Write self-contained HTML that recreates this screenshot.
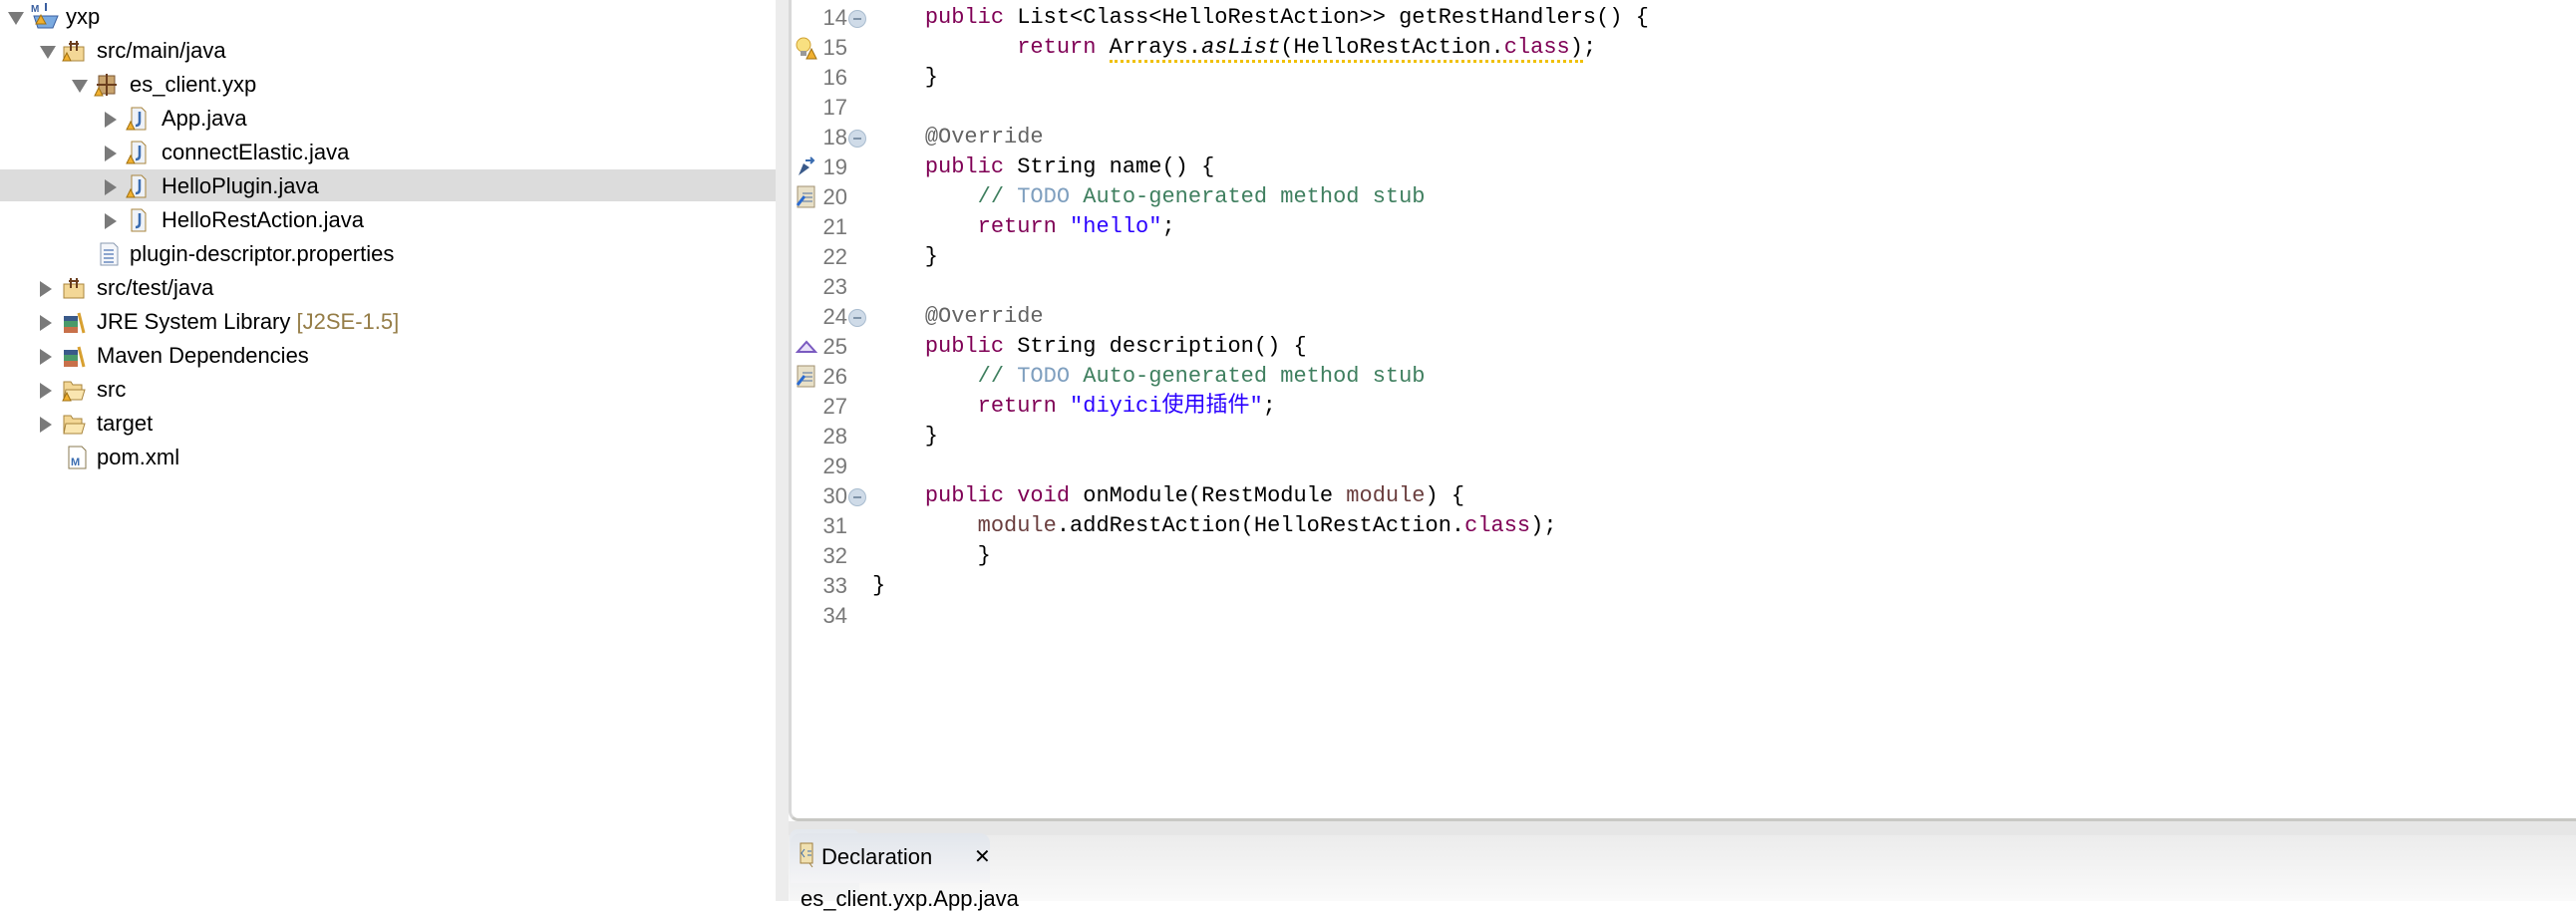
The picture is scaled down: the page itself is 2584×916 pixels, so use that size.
<!DOCTYPE html>
<html><head><meta charset="utf-8"><style>
body{margin:0;width:2584px;height:904px;overflow:hidden;background:#fff;position:relative;font-family:"Liberation Sans",sans-serif}
.row{position:absolute;left:0;width:778px;height:34px;font-size:22px;line-height:34px;color:#000;white-space:nowrap}
.row .t{position:absolute}
.tri{position:absolute;top:10px;width:0;height:0}
.tri.r{border-top:8px solid transparent;border-bottom:8px solid transparent;border-left:12px solid #7a7a7a}
.tri.d{top:12px;border-left:8px solid transparent;border-right:8px solid transparent;border-top:13px solid #7a7a7a}
.ic{position:absolute;top:5px;width:24px;height:24px}
#ed{position:absolute;left:791px;top:0;width:1793px;height:821px;border-left:3px solid #d8d8d8;border-bottom:3px solid #c8c8c4;border-bottom-left-radius:10px;background:#fff}
.ln{position:absolute;left:800px;width:50px;text-align:right;font-size:22px;color:#787878;line-height:30px;font-family:"Liberation Sans",sans-serif}
.cl{position:absolute;left:875px;font-family:"Liberation Mono","Noto Sans CJK SC",monospace;font-size:22px;line-height:30px;white-space:pre;color:#000}
.k{color:#7f0055}.s{color:#2a00ff}.c{color:#3f7f5f}.td{color:#7f9fbf}.a{color:#646464}.p{color:#6a3e3e}
.fold{position:absolute;left:851px;width:16px;height:16px;border-radius:50%;background:#cfdbe8;border:1px solid #a9bccf}
.fold:after{content:"";position:absolute;left:4px;top:7px;width:8px;height:2px;background:#7f93a8}
</style></head><body>
<div style="position:absolute;left:0;top:170px;width:778px;height:32px;background:#dcdcdc"></div>
<div style="position:absolute;left:778px;top:0;width:13px;height:904px;background:#ececec"></div>

<div class="row" style="top:0"><div class="tri d" style="left:8px"></div>
<svg class="ic" style="left:30px;top:2px;width:32px;height:32px" viewBox="0 0 32 32"><text x="1" y="10" font-size="10" font-weight="bold" fill="#3a5fa0" font-family="Liberation Sans">M</text><path d="M16 1v8" stroke="#3a5fa0" stroke-width="2"/><path d="M4 14h24l-5 12H8z" fill="#7aaae0" stroke="#3a5fa0"/><path d="M6 22l5-9 5 9z" fill="#f0b030" stroke="#a07010"/></svg>
<span class="t" style="left:66px">yxp</span></div>

<div class="row" style="top:34px"><div class="tri d" style="left:40px"></div>
<svg class="ic" style="left:62px" viewBox="0 0 24 24"><path d="M2 8h20v14H2z" fill="#f3d796" stroke="#a8843c"/><path d="M9 2v10M15 2v10M7 5h10" stroke="#6b3e1e" stroke-width="2"/><path d="M1 22l4-8 4 8z" fill="#f0b030" stroke="#a07010"/></svg>
<span class="t" style="left:97px">src/main/java</span></div>

<div class="row" style="top:68px"><div class="tri d" style="left:72px"></div>
<svg class="ic" style="left:94px" viewBox="0 0 24 24"><rect x="5" y="3" width="16" height="18" fill="#c9a46e" stroke="#7a5530"/><path d="M13 1v22M3 12h20" stroke="#6b3e1e" stroke-width="2"/><path d="M1 23l4-8 4 8z" fill="#f0b030" stroke="#a07010"/></svg>
<span class="t" style="left:130px">es_client.yxp</span></div>

<div class="row" style="top:102px"><div class="tri r" style="left:105px"></div>
<svg class="ic" style="left:126px" viewBox="0 0 24 24"><path d="M6 1h10l4 4v18H6z" fill="#eef2f8" stroke="#a8843c"/><path d="M14 5v10q0 4-4 4" fill="none" stroke="#3a6cb0" stroke-width="2.5"/><path d="M1 23l4-8 4 8z" fill="#f0b030" stroke="#a07010"/></svg>
<span class="t" style="left:162px">App.java</span></div>
<div class="row" style="top:136px"><div class="tri r" style="left:105px"></div>
<svg class="ic" style="left:126px" viewBox="0 0 24 24"><path d="M6 1h10l4 4v18H6z" fill="#eef2f8" stroke="#a8843c"/><path d="M14 5v10q0 4-4 4" fill="none" stroke="#3a6cb0" stroke-width="2.5"/><path d="M1 23l4-8 4 8z" fill="#f0b030" stroke="#a07010"/></svg>
<span class="t" style="left:162px">connectElastic.java</span></div>
<div class="row" style="top:170px"><div class="tri r" style="left:105px"></div>
<svg class="ic" style="left:126px" viewBox="0 0 24 24"><path d="M6 1h10l4 4v18H6z" fill="#eef2f8" stroke="#a8843c"/><path d="M14 5v10q0 4-4 4" fill="none" stroke="#3a6cb0" stroke-width="2.5"/><path d="M1 23l4-8 4 8z" fill="#f0b030" stroke="#a07010"/></svg>
<span class="t" style="left:162px">HelloPlugin.java</span></div>
<div class="row" style="top:204px"><div class="tri r" style="left:105px"></div>
<svg class="ic" style="left:126px" viewBox="0 0 24 24"><path d="M6 1h10l4 4v18H6z" fill="#eef2f8" stroke="#a8843c"/><path d="M14 5v10q0 4-4 4" fill="none" stroke="#3a6cb0" stroke-width="2.5"/></svg>
<span class="t" style="left:162px">HelloRestAction.java</span></div>
<div class="row" style="top:238px">
<svg class="ic" style="left:98px" viewBox="0 0 24 24"><path d="M3 1h13l4 4v18H3z" fill="#f4f6fa" stroke="#8a9ab0"/><path d="M6 8h10M6 12h10M6 16h10M6 20h10" stroke="#6a8ac0" stroke-width="1.5"/></svg>
<span class="t" style="left:130px">plugin-descriptor.properties</span></div>

<div class="row" style="top:272px"><div class="tri r" style="left:40px"></div>
<svg class="ic" style="left:62px" viewBox="0 0 24 24"><path d="M2 8h20v14H2z" fill="#f3d796" stroke="#a8843c"/><path d="M9 2v10M15 2v10M7 5h10" stroke="#6b3e1e" stroke-width="2"/></svg>
<span class="t" style="left:97px">src/test/java</span></div>
<div class="row" style="top:306px"><div class="tri r" style="left:40px"></div>
<svg class="ic" style="left:62px" viewBox="0 0 24 24"><rect x="2" y="17" width="14" height="6" fill="#c8704a"/><rect x="2" y="11" width="14" height="6" fill="#4a9a6a"/><rect x="2" y="6" width="14" height="5" fill="#3a5a8a"/><path d="M17 3l5 20" stroke="#d8a030" stroke-width="3"/></svg>
<span class="t" style="left:97px">JRE System Library <span style="color:#957d47">[J2SE-1.5]</span></span></div>
<div class="row" style="top:340px"><div class="tri r" style="left:40px"></div>
<svg class="ic" style="left:62px" viewBox="0 0 24 24"><rect x="2" y="17" width="14" height="6" fill="#c8704a"/><rect x="2" y="11" width="14" height="6" fill="#4a9a6a"/><rect x="2" y="6" width="14" height="5" fill="#3a5a8a"/><path d="M17 3l5 20" stroke="#d8a030" stroke-width="3"/></svg>
<span class="t" style="left:97px">Maven Dependencies</span></div>
<div class="row" style="top:374px"><div class="tri r" style="left:40px"></div>
<svg class="ic" style="left:62px" viewBox="0 0 24 24"><path d="M2 4h7l2 3h9v15H2z" fill="#f3d796" stroke="#a8843c"/><path d="M4 12h19l-3 10H2z" fill="#fae6b0" stroke="#a8843c"/><path d="M1 23l4-8 4 8z" fill="#f0b030" stroke="#a07010"/></svg>
<span class="t" style="left:97px">src</span></div>
<div class="row" style="top:408px"><div class="tri r" style="left:40px"></div>
<svg class="ic" style="left:62px" viewBox="0 0 24 24"><path d="M2 4h7l2 3h9v15H2z" fill="#f3d796" stroke="#a8843c"/><path d="M4 12h19l-3 10H2z" fill="#fae6b0" stroke="#a8843c"/></svg>
<span class="t" style="left:97px">target</span></div>
<div class="row" style="top:442px">
<svg class="ic" style="left:66px" viewBox="0 0 24 24"><path d="M3 1h13l4 4v18H3z" fill="#fff" stroke="#8a7a50"/><text x="5" y="20" font-size="11" font-weight="bold" fill="#3a6cb0" font-family="Liberation Sans">M</text></svg>
<span class="t" style="left:97px">pom.xml</span></div>

<div id="ed"></div>
<div class="ln" style="top:3px">14</div><div class="fold" style="top:10px"></div>
<div class="ln" style="top:33px">15</div>
<svg style="position:absolute;left:797px;top:36px" width="24" height="24" viewBox="0 0 24 24"><circle cx="9" cy="9" r="7" fill="#f8e080" stroke="#d0a030"/><rect x="6" y="15" width="6" height="5" fill="#999"/><path d="M12 23l5-10 5 10z" fill="#f0b030" stroke="#a07010"/></svg>
<div class="ln" style="top:63px">16</div>
<div class="ln" style="top:93px">17</div>
<div class="ln" style="top:123px">18</div><div class="fold" style="top:130px"></div>
<div class="ln" style="top:153px">19</div>
<svg style="position:absolute;left:798px;top:156px" width="22" height="22" viewBox="0 0 22 22"><path d="M3 20l5-12 6 4z" fill="#3a5a8a"/><path d="M10 5h8M15 2l3 3-3 3" stroke="#3a6cb0" stroke-width="2" fill="none"/></svg>
<div class="ln" style="top:183px">20</div>
<svg style="position:absolute;left:798px;top:184px" width="22" height="26" viewBox="0 0 22 26"><rect x="2" y="3" width="17" height="21" fill="#e8e0c8" stroke="#a09070"/><path d="M7 10h10M7 14h10M7 18h10" stroke="#5070a0"/><path d="M2 22l7-9" stroke="#2a6ad0" stroke-width="3"/></svg>
<div class="ln" style="top:213px">21</div>
<div class="ln" style="top:243px">22</div>
<div class="ln" style="top:273px">23</div>
<div class="ln" style="top:303px">24</div><div class="fold" style="top:310px"></div>
<div class="ln" style="top:333px">25</div>
<svg style="position:absolute;left:798px;top:340px" width="22" height="16" viewBox="0 0 22 16"><path d="M2 13L11 3l9 10z" fill="#e8e0f8" stroke="#7a5ac0" stroke-width="2"/></svg>
<div class="ln" style="top:363px">26</div>
<svg style="position:absolute;left:798px;top:364px" width="22" height="26" viewBox="0 0 22 26"><rect x="2" y="3" width="17" height="21" fill="#e8e0c8" stroke="#a09070"/><path d="M7 10h10M7 14h10M7 18h10" stroke="#5070a0"/><path d="M2 22l7-9" stroke="#2a6ad0" stroke-width="3"/></svg>
<div class="ln" style="top:393px">27</div>
<div class="ln" style="top:423px">28</div>
<div class="ln" style="top:453px">29</div>
<div class="ln" style="top:483px">30</div><div class="fold" style="top:490px"></div>
<div class="ln" style="top:513px">31</div>
<div class="ln" style="top:543px">32</div>
<div class="ln" style="top:573px">33</div>
<div class="ln" style="top:603px">34</div>

<div class="cl" style="top:3px">    <span class="k">public</span> List&lt;Class&lt;HelloRestAction&gt;&gt; getRestHandlers() {</div>
<div class="cl" style="top:33px">           <span class="k">return</span> <span style="border-bottom:3px dotted #f0c000">Arrays.<i>asList</i>(HelloRestAction.<span class="k">class</span>)</span>;</div>
<div class="cl" style="top:63px">    }</div>
<div class="cl" style="top:123px">    <span class="a">@Override</span></div>
<div class="cl" style="top:153px">    <span class="k">public</span> String name() {</div>
<div class="cl" style="top:183px">        <span class="c">// <span class="td">TODO</span> Auto-generated method stub</span></div>
<div class="cl" style="top:213px">        <span class="k">return</span> <span class="s">"hello"</span>;</div>
<div class="cl" style="top:243px">    }</div>
<div class="cl" style="top:303px">    <span class="a">@Override</span></div>
<div class="cl" style="top:333px">    <span class="k">public</span> String description() {</div>
<div class="cl" style="top:363px">        <span class="c">// <span class="td">TODO</span> Auto-generated method stub</span></div>
<div class="cl" style="top:393px">        <span class="k">return</span> <span class="s">"diyici使用插件"</span>;</div>
<div class="cl" style="top:423px">    }</div>
<div class="cl" style="top:483px">    <span class="k">public</span> <span class="k">void</span> onModule(RestModule <span class="p">module</span>) {</div>
<div class="cl" style="top:513px">        <span class="p">module</span>.addRestAction(HelloRestAction.<span class="k">class</span>);</div>
<div class="cl" style="top:543px">        }</div>
<div class="cl" style="top:573px">}</div>

<div style="position:absolute;left:791px;top:824px;width:1793px;height:14px;background:#e6e6e6"></div>
<div style="position:absolute;left:791px;top:838px;width:1793px;height:66px;background:linear-gradient(#ececec,#fafafa)"></div>
<div style="position:absolute;left:792px;top:832px;width:70px;height:72px;border-radius:8px 8px 0 0;background:linear-gradient(#e4e8ee,#f6f6f6)"></div>
<div style="position:absolute;left:792px;top:832px;width:0"></div>
<div style="position:absolute;left:793px;top:836px;width:200px;height:50px;border-radius:10px 10px 0 0;background:linear-gradient(#e2e6ec,#f4f4f6)"></div>
<svg style="position:absolute;left:802px;top:844px" width="16" height="28" viewBox="0 0 16 28"><rect x="1" y="2" width="12" height="20" fill="#f0e0b0" stroke="#a08040"/><path d="M5 8l-3 4 3 4M8 10h4M8 14h4" stroke="#3a6cb0" fill="none"/><path d="M10 22l3 4" stroke="#a08040"/></svg>
<div style="position:absolute;left:824px;top:846px;font-size:22px;line-height:28px">Declaration</div>
<div style="position:absolute;left:977px;top:846px;font-size:20px;line-height:28px">✕</div>
<div style="position:absolute;left:803px;top:888px;font-size:22px;line-height:28px">es_client.yxp.App.java</div>
</body></html>
